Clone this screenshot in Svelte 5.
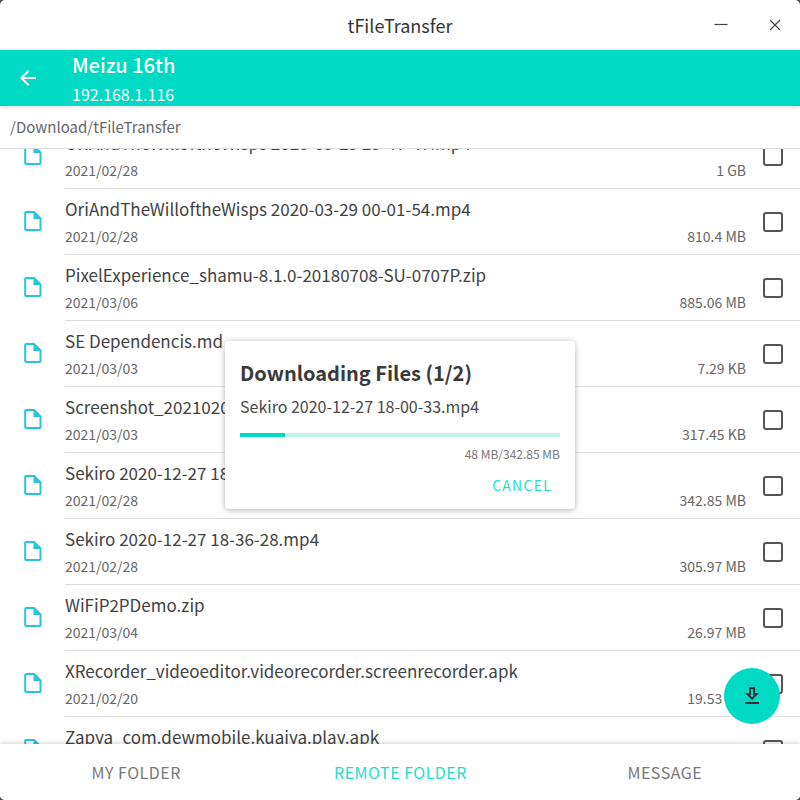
<script>
  const files = [
    { name: "OriAndTheWilloftheWisps 2020-03-29 23-47-47.mp4", date: "2021/02/28", size: "1 GB" },
    { name: "OriAndTheWilloftheWisps 2020-03-29 00-01-54.mp4", date: "2021/02/28", size: "810.4 MB" },
    { name: "PixelExperience_shamu-8.1.0-20180708-SU-0707P.zip", date: "2021/03/06", size: "885.06 MB" },
    { name: "SE Dependencis.md", date: "2021/03/03", size: "7.29 KB" },
    { name: "Screenshot_20210207-103323.png", date: "2021/03/03", size: "317.45 KB" },
    { name: "Sekiro 2020-12-27 18-00-33.mp4", date: "2021/02/28", size: "342.85 MB" },
    { name: "Sekiro 2020-12-27 18-36-28.mp4", date: "2021/02/28", size: "305.97 MB" },
    { name: "WiFiP2PDemo.zip", date: "2021/03/04", size: "26.97 MB" },
    { name: "XRecorder_videoeditor.videorecorder.screenrecorder.apk", date: "2021/02/20", size: "19.53 MB" },
    { name: "Zapya_com.dewmobile.kuaiya.play.apk", date: "2021/02/20", size: "32.1 MB" },
  ];
  const tabs = ["MY FOLDER", "REMOTE FOLDER", "MESSAGE"];
</script>

<div class="window">
  <div class="titlebar">
    <span class="title">tFileTransfer</span>
    <svg class="min" width="14" height="14" viewBox="0 0 14 14"><path d="M0.5 6.5h13" stroke="#444" stroke-width="1.2" /></svg>
    <svg class="close" width="14" height="14" viewBox="0 0 14 14"><path d="M2 2l10 10M12 2L2 12" stroke="#444" stroke-width="1.2" /></svg>
  </div>

  <header class="appbar">
    <svg class="back" width="24" height="24" viewBox="0 0 24 24"><path fill="#fff" d="M20 11H7.83l5.59-5.59L12 4l-8 8 8 8 1.41-1.41L7.83 13H20v-2z" /></svg>
    <div class="device">
      <div class="device-name">Meizu 16th</div>
      <div class="device-ip">192.168.1.116</div>
    </div>
  </header>

  <div class="path">/Download/tFileTransfer</div>

  <div class="list">
    <div class="rows">
      {#each files as file}
        <div class="row">
          <svg class="file" width="24" height="24" viewBox="0 0 24 24"><path fill="#26c6da" d="M14.5 2H6.2c-1.2 0-2 .9-2 2v16c0 1.1.8 2 2 2h13.3c1.2 0 2-.9 2-2V9l-7-7zM6.2 20V4h7.3v6h6v10H6.2z" /></svg>
          <div class="body">
            <div class="info">
              <div class="name">{file.name}</div>
              <div class="meta"><span>{file.date}</span><span>{file.size}</span></div>
            </div>
            <span class="check"></span>
          </div>
        </div>
      {/each}
    </div>
  </div>

  <nav class="tabs">
    {#each tabs as tab, i}
      <div class="tab" class:active={i === 1}>{tab}</div>
    {/each}
  </nav>

  <button class="fab" aria-label="Download">
    <svg width="24" height="24" viewBox="0 0 24 24"><path fill="#333" d="M19 9h-4V3H9v6H5l7 7 7-7zM11 11V5h2v6h1.17L12 13.17 9.83 11H11zM5 18h14v2H5z" /></svg>
  </button>

  <div class="dialog">
    <div class="dialog-title">Downloading Files (1/2)</div>
    <div class="dialog-file">Sekiro 2020-12-27 18-00-33.mp4</div>
    <div class="bar"><div class="fill" style="width: 14%"></div></div>
    <div class="progress">48 MB/342.85 MB</div>
    <div class="actions"><span class="cancel">CANCEL</span></div>
  </div>
</div>

<style>
  :global(body) {
    margin: 0;
    background: #444;
  }

  .window {
    position: relative;
    width: 800px;
    height: 800px;
    display: flex;
    flex-direction: column;
    overflow: hidden;
    border-radius: 5px;
    background: #fff;
    color: #333;
    font-family: "Noto Sans CJK SC", "Noto Sans", sans-serif;
  }

  .titlebar {
    position: relative;
    height: 50px;
    flex: none;
    display: flex;
    align-items: center;
    justify-content: center;
  }

  .title {
    font-size: 18px;
    color: #333;
  }

  .min,
  .close {
    position: absolute;
    top: 18px;
  }

  .min {
    left: 714px;
  }

  .close {
    left: 768px;
  }

  .appbar {
    position: relative;
    z-index: 2;
    height: 56px;
    flex: none;
    display: flex;
    background: #00dac5;
    color: #fff;
    box-shadow: 0 1px 4px rgba(0, 0, 0, 0.12);
  }

  .back {
    margin: 16px 0 0 16px;
  }

  .device {
    margin-left: 32px;
  }

  .device-name {
    font-size: 20px;
    line-height: 30px;
    font-weight: 500;
  }

  .device-ip {
    font-size: 16px;
    line-height: 28px;
  }

  .path {
    height: 42px;
    flex: none;
    padding-left: 10px;
    line-height: 42px;
    font-size: 15px;
    color: #666;
    border-bottom: 1px solid #ddd;
  }

  .list {
    flex: 1;
    overflow: hidden;
  }

  .rows {
    margin-top: -26px;
  }

  .row {
    height: 66px;
    display: flex;
  }

  .file {
    margin: 20px 0 0 20px;
    flex: none;
  }

  .body {
    flex: 1;
    display: flex;
    min-width: 0;
    margin-left: 21px;
    border-bottom: 1px solid #ddd;
  }

  .info {
    flex: 1;
    min-width: 0;
    padding-right: 17px;
  }

  .name {
    font-size: 17px;
    line-height: 26px;
    margin-top: 7px;
    color: #424242;
  }

  .meta {
    display: flex;
    justify-content: space-between;
    font-size: 14px;
    line-height: 22px;
    margin-top: 3px;
    color: #666;
  }

  .check {
    width: 16px;
    height: 16px;
    flex: none;
    margin: 23px 17px 0 0;
    border: 2px solid #555;
    border-radius: 3px;
  }

  .tabs {
    position: relative;
    z-index: 2;
    height: 56px;
    flex: none;
    display: flex;
    padding: 0 3px 0 4px;
    background: #fff;
    box-shadow: 0 -1px 5px rgba(0, 0, 0, 0.18);
  }

  .tab {
    flex: 1;
    display: flex;
    align-items: center;
    justify-content: center;
    font-size: 16px;
    letter-spacing: 0.5px;
    color: #777;
  }

  .tab.active {
    color: #1fdcca;
  }

  .fab {
    position: absolute;
    z-index: 3;
    left: 724px;
    top: 668px;
    width: 56px;
    height: 56px;
    padding: 16px;
    border: 0;
    border-radius: 50%;
    background: #00dac5;
  }

  .fab svg {
    display: block;
  }

  .dialog {
    position: absolute;
    z-index: 4;
    left: 225px;
    top: 341px;
    width: 350px;
    height: 168px;
    box-sizing: border-box;
    padding: 15px;
    background: #fff;
    border-radius: 4px;
    box-shadow: 0 1px 6px rgba(0, 0, 0, 0.3);
  }

  .dialog-title {
    font-size: 20px;
    line-height: 34px;
    font-weight: 700;
    color: #3a3a3a;
  }

  .dialog-file {
    margin-top: 4px;
    font-size: 16px;
    line-height: 24px;
    color: #484848;
  }

  .bar {
    height: 4px;
    margin-top: 15px;
    background: #c3f5ef;
  }

  .fill {
    height: 100%;
    background: #00dac5;
  }

  .progress {
    margin-top: 8px;
    text-align: right;
    font-size: 12px;
    line-height: 18px;
    color: #777;
  }

  .actions {
    display: flex;
    justify-content: flex-end;
    margin-top: 11px;
  }

  .cancel {
    font-size: 14px;
    line-height: 22px;
    letter-spacing: 1.25px;
    color: #1fdcca;
    margin-right: 8px;
  }
</style>
